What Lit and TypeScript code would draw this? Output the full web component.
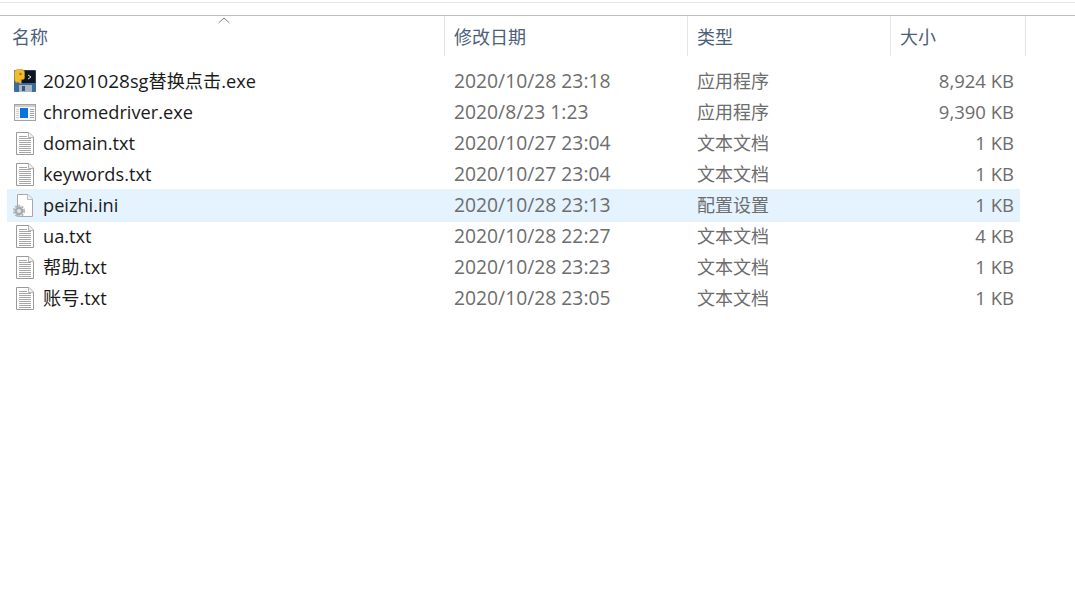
import { LitElement, html, css, svg } from "lit";
import { customElement } from "lit/decorators.js";

const txt = html`<svg class="ic" width="24" height="23" viewBox="0 0 24 23">
  <path d="M3.500 .5H16L20.500 5V22.500H3.500Z" fill="#fff" stroke="#9a9a9a"/>
  <path d="M15.500 .5V5.500H20.500" fill="#f2f2f2" stroke="#b5b5b5"/>
  ${[4, 6, 8, 10, 12, 14, 16, 18, 20].map(
    (y) => svg`<rect x="6" y="${y}" width="${y < 6 ? 8 : 12}" height="1" fill="#a6a6a6"/>`
  )}
</svg>`;

const app = html`<svg class="ic" width="24" height="23" viewBox="0 0 24 23" style="overflow:visible">
  <rect x="1" y="0" width="22" height="22" rx="1" fill="#3a6d9c"/>
  <rect x="9" y=".5" width="13.500" height="12.500" fill="#10151c"/>
  <path d="M15 5l3 2-3 2" fill="none" stroke="#dfe7ee" stroke-width="1"/>
  <rect x="6" y="15" width="13" height="7" fill="#a9b7c4"/>
  <rect x="9" y="16" width="3" height="5" fill="#33597c"/>
  <path d="M1.500 2.500C1.500 .5 3 -.5 5 -.5H9C10.500 -.5 11.500 1 11.500 2.500V7.500C11.500 9 10.500 9.500 9.500 9.500H8V14L5 12 3 12.500C2 11.500 1.500 9.500 1.500 7.500Z" fill="#f2bc2f" stroke="#c98f14" stroke-width=".6"/>
  <circle cx="7.500" cy="4" r="1.300" fill="#a97e16"/>
</svg>`;

const win = html`<svg class="ic" width="24" height="23" viewBox="0 0 24 23">
  <rect x="1.500" y="3.500" width="21" height="16" fill="#f7f7f7" stroke="#a3a3a3"/>
  <rect x="2" y="4" width="20" height="2" fill="#cdcdcd"/>
  <rect x="7" y="7" width="8" height="10" fill="#0a74de"/>
  ${[8, 10, 12, 14, 16].map((y) => svg`<rect x="17" y="${y}" width="4" height="1" fill="#a5a5a5"/>`)}
  ${[8, 10, 12, 14, 16].map((y) => svg`<rect x="3" y="${y}" width="3" height="1" fill="#d0d0d0"/>`)}
</svg>`;

const ini = html`<svg class="ic" width="24" height="23" viewBox="0 0 24 23">
  <path d="M4.500 .5H15L19.500 5V22.500H4.500Z" fill="#fff" stroke="#a8a8a8"/>
  <path d="M14.500 .5V5.500H19.500" fill="#f2f2f2" stroke="#bcbcbc"/>
  <circle cx="6" cy="17" r="5.200" fill="none" stroke="#b4b9bc" stroke-width="2" stroke-dasharray="2 1.300"/>
  <circle cx="6" cy="17" r="4.400" fill="#a5abaf"/>
  <circle cx="6" cy="17" r="2" fill="#dfe4e7"/>
</svg>`;

const rows = [
  [app, html`<span class="num">20201028</span>sg替换点击.exe`, "2020/10/28 23:18", "应用程序", "8,924 KB", false],
  [win, "chromedriver.exe", "2020/8/23 1:23", "应用程序", "9,390 KB", false],
  [txt, "domain.txt", "2020/10/27 23:04", "文本文档", "1 KB", false],
  [txt, "keywords.txt", "2020/10/27 23:04", "文本文档", "1 KB", false],
  [ini, "peizhi.ini", "2020/10/28 23:13", "配置设置", "1 KB", true],
  [txt, "ua.txt", "2020/10/28 22:27", "文本文档", "4 KB", false],
  [txt, "帮助.txt", "2020/10/28 23:23", "文本文档", "1 KB", false],
  [txt, "账号.txt", "2020/10/28 23:05", "文本文档", "1 KB", false],
] as const;

@customElement("app-root")
export class AppRoot extends LitElement {
  static styles = css`
    :host {
      display: block;
      width: 1075px;
      height: 607px;
      overflow: hidden;
      background: #fff;
      font-family: "Open Sans", "Noto Sans CJK SC", sans-serif;
      font-size: 18px;
    }
    .root { padding-top: 2px; }
    .top {
      height: 12px;
      border-top: 1px solid #e5e5e5;
      border-bottom: 1px solid #bfbfbf;
    }
    .head {
      position: relative;
      display: grid;
      grid-template-columns: 445px 243px 203px 135px;
      grid-template-rows: 40px;
      height: 40px;
      color: #4c607a;
    }
    .head > div {
      border-right: 1px solid #e5e5e5;
      padding: 2px 0 0 9px;
      line-height: 38px;
    }
    .head > div:first-child { padding-left: 12px; }
    .sort {
      position: absolute;
      left: 218px;
      top: 1px;
    }
    .list {
      margin: 10px 0 0 7px;
      width: 1013px;
    }
    .row {
      display: grid;
      grid-template-columns: 438px 243px 203px 123px;
      height: 31px;
      align-items: center;
      color: #6d6d6d;
      line-height: 29px;
      white-space: nowrap;
    }
    .row.sel { background: #e5f3ff; height: 33px; margin: -1px 0; }
    .name {
      display: flex;
      align-items: center;
      gap: 6px;
      padding-left: 6px;
      color: #1a1a1a;
      font-size: 18.2px;
    }
    .num { font-size: 19px; }
    .date { font-size: 19.3px; padding-bottom: 2px; }
    .ic { flex: none; }
    .date, .type { padding-left: 9px; }
    .size { text-align: right; font-size: 18.5px; padding-bottom: 2px; }
  `;

  render() {
    return html`<div class="root">
      <div class="top"></div>
      <div class="head">
        <div>名称</div>
        <div>修改日期</div>
        <div>类型</div>
        <div>大小</div>
        <svg class="sort" width="12" height="7" viewBox="0 0 12 7">
          <path d="M.5 6L6 1l5.500 5" fill="none" stroke="#7f7f7f"/>
        </svg>
      </div>
      <div class="list">
        ${rows.map(
          (r) => html`<div class="row ${r[5] ? "sel" : ""}">
            <div class="name">${r[0]}<span>${r[1]}</span></div>
            <div class="date">${r[2]}</div>
            <div class="type">${r[3]}</div>
            <div class="size">${r[4]}</div>
          </div>`
        )}
      </div>
    </div>`;
  }
}
